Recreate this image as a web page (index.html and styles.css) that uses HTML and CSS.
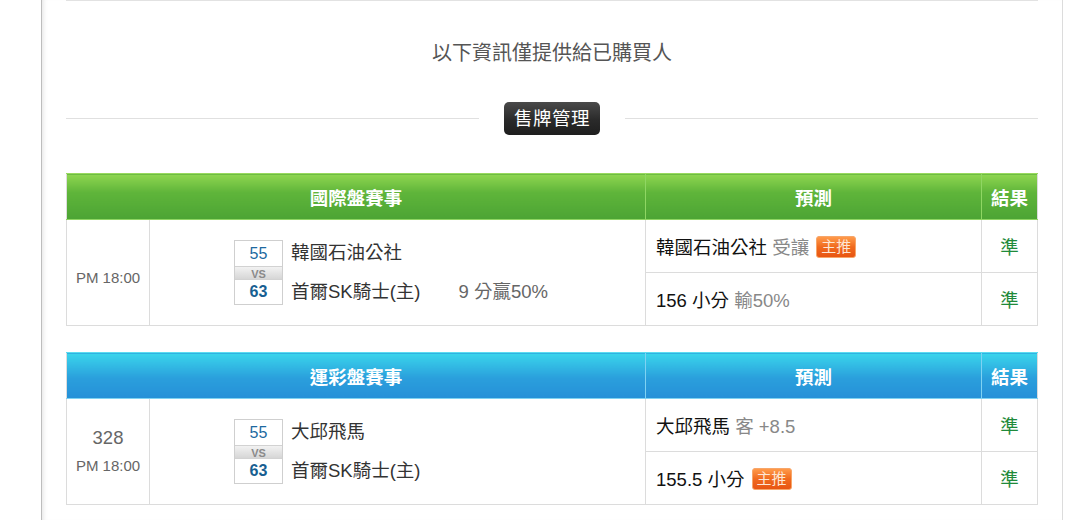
FILE: index.html
```html
<!DOCTYPE html>
<html lang="zh-Hant">
<head>
<meta charset="utf-8">
<title>售牌管理</title>
<link rel="stylesheet" href="styles.css">
</head>
<body>
<div class="page">
  <div class="panel">
    <div class="rule-top"></div>
    <p class="notice">以下資訊僅提供給已購買人</p>
    <div class="section-head">
      <span class="line"></span>
      <span class="badge-title">售牌管理</span>
      <span class="line"></span>
    </div>

    <table class="games green">
      <colgroup><col class="c-time"><col class="c-match"><col class="c-pred"><col class="c-res"></colgroup>
      <thead>
        <tr><th colspan="2">國際盤賽事</th><th>預測</th><th>結果</th></tr>
      </thead>
      <tbody>
        <tr>
          <td rowspan="2" class="time time-only"><span class="tm">PM 18:00</span></td>
          <td rowspan="2" class="match">
            <div class="match-inner">
              <div class="score">
                <span class="s-top">55</span>
                <span class="s-vs">VS</span>
                <span class="s-bot">63</span>
              </div>
              <div class="teams">
                <div class="team">韓國石油公社</div>
                <div class="team">首爾SK騎士(主)<span class="line-info">9 分贏50%</span></div>
              </div>
            </div>
          </td>
          <td class="pred">韓國石油公社 <span class="muted">受讓</span> <span class="tag">主推</span></td>
          <td class="res">準</td>
        </tr>
        <tr>
          <td class="pred">156 小分 <span class="muted">輸50%</span></td>
          <td class="res">準</td>
        </tr>
      </tbody>
    </table>

    <table class="games blue">
      <colgroup><col class="c-time"><col class="c-match"><col class="c-pred"><col class="c-res"></colgroup>
      <thead>
        <tr><th colspan="2">運彩盤賽事</th><th>預測</th><th>結果</th></tr>
      </thead>
      <tbody>
        <tr>
          <td rowspan="2" class="time"><span class="num">328</span><span class="tm">PM 18:00</span></td>
          <td rowspan="2" class="match">
            <div class="match-inner">
              <div class="score">
                <span class="s-top">55</span>
                <span class="s-vs">VS</span>
                <span class="s-bot">63</span>
              </div>
              <div class="teams">
                <div class="team">大邱飛馬</div>
                <div class="team">首爾SK騎士(主)</div>
              </div>
            </div>
          </td>
          <td class="pred">大邱飛馬 <span class="muted">客 +8.5</span></td>
          <td class="res">準</td>
        </tr>
        <tr>
          <td class="pred">155.5 小分 <span class="tag">主推</span></td>
          <td class="res">準</td>
        </tr>
      </tbody>
    </table>
  </div>
</div>
</body>
</html>
```

FILE: styles.css
```css
* { box-sizing: border-box; }

html, body {
  margin: 0;
  padding: 0;
  background: #fff;
  font-family: "Liberation Sans", "Noto Sans CJK TC", sans-serif;
  color: #333;
}

.page {
  padding-left: 41px;
  width: 1080px;
  height: 520px;
  overflow: hidden;
}

.panel {
  width: 1022px;
  min-height: 520px;
  border-left: 1px solid #bdbdbd;
  border-right: 1px solid #dcdcdc;
  box-shadow: inset 5px 0 5px -4px rgba(0, 0, 0, 0.12);
  padding: 0 24px;
}

.rule-top {
  height: 1px;
  background: #e2e2e2;
}

.notice {
  margin: 37px 0 0;
  height: 30px;
  line-height: 30px;
  text-align: center;
  font-size: 20px;
  color: #555;
}

.section-head {
  margin-top: 34px;
  display: flex;
  align-items: center;
  gap: 25px;
  height: 33px;
}

.section-head .line {
  flex: 1;
  height: 1px;
  background: #e0e0e0;
}

.badge-title {
  width: 96px;
  height: 33px;
  line-height: 33px;
  text-align: center;
  border-radius: 5px;
  background: linear-gradient(#4a4a4a, #2a2a2a 55%, #1e1e1e);
  color: #fff;
  font-size: 18.5px;
  letter-spacing: 0.5px;
}

.games {
  width: 971px;
  border-collapse: collapse;
  table-layout: fixed;
  margin-top: 38px;
  border: 1px solid #dcdcdc;
}

.games.blue { margin-top: 26px; }

.c-time { width: 83px; }
.c-match { width: 496px; }
.c-pred { width: 336px; }
.c-res { width: 56px; }

.games th {
  height: 46px;
  padding: 0;
  color: #fff;
  font-size: 18.5px;
  font-weight: bold;
  text-align: center;
  border-left: 1px solid transparent;
}

.green th {
  background: linear-gradient(#8fd650, #5fb53a 40%, #4ca434);
  border-color: #8fd663;
  border-bottom: 1px solid #8fd663;
  border-top: 1px solid #9ad95f;
}

.blue th {
  background: linear-gradient(#3ad5ec, #2a9fdc 55%, #2690d8);
  border-color: #7fd2f2;
  border-bottom: 1px solid #7fd2f2;
  border-top: 1px solid #5cdcf0;
}

.games th:first-child { border-left: none; }

.games td {
  border: 1px solid #dcdcdc;
  padding: 0;
  height: 53px;
}

.time {
  text-align: center;
  vertical-align: middle;
  color: #666;
}

.time.time-only { padding-top: 10px !important; }

.time .tm {
  display: block;
  font-size: 15px;
  line-height: 20px;
}

.time .num {
  display: block;
  font-size: 18.5px;
  line-height: 22px;
  margin-bottom: 7px;
}

.match-inner {
  display: flex;
  align-items: center;
  padding-left: 84px;
}

.score {
  width: 49px;
  border: 1px solid #cfcfcf;
  display: flex;
  flex-direction: column;
  text-align: center;
  font-size: 16px;
  color: #1d69a0;
}

.s-top { height: 25px; line-height: 25px; }

.s-vs {
  height: 14px;
  line-height: 14px;
  font-size: 11px;
  font-weight: bold;
  color: #8a8a8a;
  background: linear-gradient(#f2f2f2, #d6d6d6);
  border-top: 1px solid #d2d2d2;
  border-bottom: 1px solid #d2d2d2;
}

.s-bot { height: 24px; line-height: 24px; font-weight: bold; color: #185f92; }

.teams {
  margin-left: 8px;
  display: flex;
  flex-direction: column;
  gap: 15px;
  font-size: 18.5px;
  color: #333;
}

.team { line-height: 24px; }

.line-info {
  margin-left: 38px;
  color: #666;
}

.pred {
  padding-left: 10px !important;
  font-size: 18.5px;
  color: #111;
  white-space: nowrap;
}

.muted { color: #888; }

.tag {
  display: inline-block;
  vertical-align: 2px;
  height: 22px;
  line-height: 20px;
  padding: 0 4px;
  margin-left: 2px;
  font-size: 15px;
  color: #fde6d4;
  border: 1px solid #f7a66a;
  border-radius: 3px;
  background: linear-gradient(#ff9a4a, #f06a1e 50%, #e85512);
}

.res {
  text-align: center;
  color: #1f8a3a;
  font-size: 18.5px;
}
```
